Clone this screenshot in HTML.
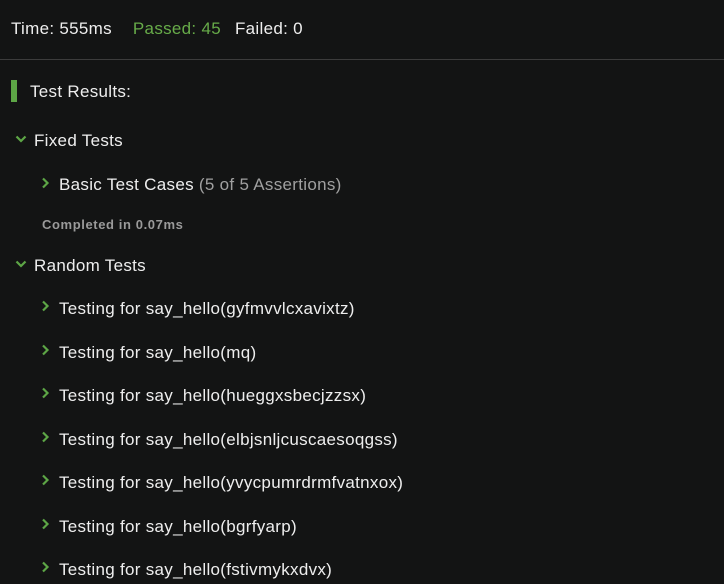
<!DOCTYPE html>
<html><head><meta charset="utf-8"><style>
html,body{margin:0;padding:0;background:#131414;width:724px;height:584px;overflow:hidden}
body{font-family:"Liberation Sans",sans-serif;color:#eeeeee;font-size:17px;letter-spacing:0.3px;position:relative}
.t{position:absolute;white-space:nowrap;line-height:20px}
.g{color:#67ab49}
.line{position:absolute;left:0;top:59px;width:724px;height:1px;background:#3c3c3c}
.bar{position:absolute;left:11px;top:80px;width:6px;height:22px;background:#5da646}
svg{position:absolute}
.gray{color:#a0a0a0}
</style></head><body>
<div class="t" style="left:11px;top:19px;">Time: 555ms<span class="g" style="margin-left:21px">Passed: 45</span><span style="margin-left:14px">Failed: 0</span></div>
<div class="line"></div>
<div class="bar"></div>
<div class="t" style="left:30px;top:82px;">Test Results:</div>
<svg style="left:15px;top:134px" width="12" height="10" viewBox="0 0 12 10"><path d="M1.5 2.5 L6 7 L10.5 2.5" stroke="#5da646" stroke-width="2.2" fill="none"/></svg>
<div class="t" style="left:34px;top:131px;">Fixed Tests</div>
<svg style="left:40px;top:177px" width="10" height="12" viewBox="0 0 10 12"><path d="M3 1.5 L7.5 6 L3 10.5" stroke="#5da646" stroke-width="2.2" fill="none"/></svg>
<div class="t" style="left:59px;top:175px;">Basic Test Cases <span class="gray">(5 of 5 Assertions)</span></div>
<div class="t gray" style="left:42px;top:215px;font-size:13px;letter-spacing:0.6px;font-weight:bold;color:#9a9a9a">Completed in 0.07ms</div>
<svg style="left:15px;top:259px" width="12" height="10" viewBox="0 0 12 10"><path d="M1.5 2.5 L6 7 L10.5 2.5" stroke="#5da646" stroke-width="2.2" fill="none"/></svg>
<div class="t" style="left:34px;top:256px;">Random Tests</div>

<svg style="left:40px;top:300px" width="10" height="12" viewBox="0 0 10 12"><path d="M3 1.5 L7.5 6 L3 10.5" stroke="#5da646" stroke-width="2.2" fill="none"/></svg>
<div class="t" style="left:59px;top:299px;">Testing for say_hello(gyfmvvlcxavixtz)</div>
<svg style="left:40px;top:344px" width="10" height="12" viewBox="0 0 10 12"><path d="M3 1.5 L7.5 6 L3 10.5" stroke="#5da646" stroke-width="2.2" fill="none"/></svg>
<div class="t" style="left:59px;top:343px;">Testing for say_hello(mq)</div>
<svg style="left:40px;top:387px" width="10" height="12" viewBox="0 0 10 12"><path d="M3 1.5 L7.5 6 L3 10.5" stroke="#5da646" stroke-width="2.2" fill="none"/></svg>
<div class="t" style="left:59px;top:386px;">Testing for say_hello(hueggxsbecjzzsx)</div>
<svg style="left:40px;top:431px" width="10" height="12" viewBox="0 0 10 12"><path d="M3 1.5 L7.5 6 L3 10.5" stroke="#5da646" stroke-width="2.2" fill="none"/></svg>
<div class="t" style="left:59px;top:430px;">Testing for say_hello(elbjsnljcuscaesoqgss)</div>
<svg style="left:40px;top:474px" width="10" height="12" viewBox="0 0 10 12"><path d="M3 1.5 L7.5 6 L3 10.5" stroke="#5da646" stroke-width="2.2" fill="none"/></svg>
<div class="t" style="left:59px;top:473px;">Testing for say_hello(yvycpumrdrmfvatnxox)</div>
<svg style="left:40px;top:518px" width="10" height="12" viewBox="0 0 10 12"><path d="M3 1.5 L7.5 6 L3 10.5" stroke="#5da646" stroke-width="2.2" fill="none"/></svg>
<div class="t" style="left:59px;top:517px;">Testing for say_hello(bgrfyarp)</div>
<svg style="left:40px;top:561px" width="10" height="12" viewBox="0 0 10 12"><path d="M3 1.5 L7.5 6 L3 10.5" stroke="#5da646" stroke-width="2.2" fill="none"/></svg>
<div class="t" style="left:59px;top:560px;">Testing for say_hello(fstivmykxdvx)</div>
</body></html>
